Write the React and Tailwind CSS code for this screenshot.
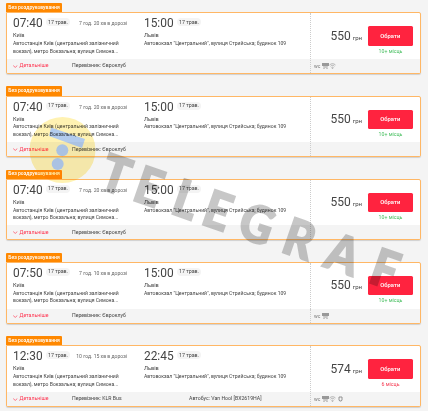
const AMENITIES_FULL = ['wc', 'bus', 'wifi'];

const TRIPS = [
  { id: 1, departure: '07:40', arrival: '15:00', duration: '7 год. 20 хв в дорозі', carrier: 'Євроклуб', price: 550, seats: '10+ місць', amenities: AMENITIES_FULL },
  { id: 2, departure: '07:40', arrival: '15:00', duration: '7 год. 20 хв в дорозі', carrier: 'Євроклуб', price: 550, seats: '10+ місць', amenities: [] },
  { id: 3, departure: '07:40', arrival: '15:00', duration: '7 год. 20 хв в дорозі', carrier: 'Євроклуб', price: 550, seats: '10+ місць', amenities: [] },
  { id: 4, departure: '07:50', arrival: '15:00', duration: '7 год. 10 хв в дорозі', carrier: 'Євроклуб', price: 550, seats: '10+ місць', amenities: ['wc', 'bus'] },
  { id: 5, departure: '12:30', arrival: '22:45', duration: '10 год. 15 хв в дорозі', carrier: 'KLR Bus', bus: 'Van Hool [BX2619HA]', price: 574, seats: '6 місць', few: true, amenities: ['wc', 'bus', 'wifi', 'socket'] },
];

function Amenity({ type }) {
  if (type === 'wc') {
    return <span className="w-[7px] text-[5px] leading-none text-[#777]">wc</span>;
  }
  if (type === 'bus') {
    return (
      <svg viewBox="0 0 14 12" className="h-[6px] w-[7px]" fill="#999">
        <path d="M0 0h14v6H0zM2 7h10l-1 2H3zM3 10h2v2H3zM9 10h2v2H9z" />
      </svg>
    );
  }
  if (type === 'wifi') {
    return (
      <svg viewBox="0 0 14 12" className="h-[6px] w-[7px]" fill="none" stroke="#999" strokeWidth="1.4">
        <path d="M1 4c3.500-3.500 8.500-3.500 12 0M3 6.500c2.500-2.300 5.500-2.300 8 0M5 9c1.300-1 2.700-1 4 0" />
        <circle cx="7" cy="10.500" r="0.600" />
      </svg>
    );
  }
  return (
    <svg viewBox="0 0 10 12" className="ml-px h-[6px] w-[5px]" fill="none" stroke="#888" strokeWidth="1.800">
      <path d="M2 2h6v6L6.500 10h-3L2 8z" />
    </svg>
  );
}

function Stop({ time, city, children, duration }) {
  return (
    <>
      <div className="flex h-[13px] items-start">
        <span className="w-[30px] text-[11.900px] leading-[14px] text-[#444]">{time}</span>
        <span className="ml-[3px] mt-[2px] flex h-[8px] w-[24px] items-center justify-center rounded-full bg-[#f4f4f4] text-[5.300px] leading-none text-[#444]">
          17 трав.
        </span>
        {duration && (
          <span className="ml-auto mt-[4px] text-[5.080px] leading-[7px] text-[#666]">{duration}</span>
        )}
      </div>
      <div className="mt-[2px] text-[5.600px] leading-[8.500px] text-[#444]">{city}</div>
      <div className="pt-[0.300px] text-[5.080px] leading-[7.600px] text-[#444]">{children}</div>
    </>
  );
}

function TripCard({ trip }) {
  return (
    <article className="h-[83.250px]">
      <div className="flex h-[9.300px] w-[56px] items-center justify-center rounded-t-[1px] bg-[#ff8800] text-[5.050px] font-medium text-white">
        Без роздруковування
      </div>
      <div className="flex h-[61.700px] w-[415px] flex-col overflow-hidden rounded-[2px] rounded-tl-none border border-[#ffb765] bg-white shadow-[0_1px_1px_rgba(0,0,0,0.15)]">
        <div className="flex min-h-0 flex-1">
          <div className="w-[120px] shrink-0 whitespace-nowrap pl-[6px] pt-[3px]">
            <Stop time={trip.departure} city="Київ" duration={trip.duration}>
              Автостанція Київ (центральний залізничний
              <br />
              вокзал), метро Вокзальна; вулиця Симона...
            </Stop>
          </div>
          <div className="ml-[17px] w-[166px] shrink-0 whitespace-nowrap pt-[3px]">
            <Stop time={trip.arrival} city="Львів">
              Автовокзал "Центральний", вулиця Стрийська; будинок 109
            </Stop>
          </div>
          <div className="flex flex-1 border-l border-dotted border-[#ccc] pt-[13px]">
            <div className="ml-[19.500px] mt-[2.300px] flex h-[14px] w-[37px] items-baseline gap-[2px] whitespace-nowrap leading-[14px] text-[#444]">
              <span className="text-[12px]">{trip.price}</span>
              <span className="text-[6px]">грн</span>
            </div>
            <div className="w-[46px]">
              <button
                type="button"
                className="flex h-[19.300px] w-[45.500px] items-center justify-center rounded-[1.500px] bg-[#ff233f] text-[5.900px] font-medium text-white"
              >
                Обрати
              </button>
              <div className={`mt-[2px] text-center text-[5.200px] leading-[7px] ${trip.few ? 'text-[#f5354d]' : 'text-[#43bd5c]'}`}>
                {trip.seats}
              </div>
            </div>
          </div>
        </div>
        <div className="flex h-[14px] shrink-0 items-center whitespace-nowrap bg-[#f4f4f4] pt-[0.700px] text-[5.200px] text-[#444]">
          <div className="flex w-[65px] items-center gap-[2px] pl-[6px] text-[#ff3551]">
            <svg viewBox="0 0 10 6" className="h-[3px] w-[4.500px]" fill="none" stroke="currentColor" strokeWidth="1.500">
              <path d="M0.500 1 5 5l4.500-4" />
            </svg>
            Детальніше
          </div>
          <div className="w-[117px]">Перевізник: {trip.carrier}</div>
          <div className="w-[121px]">{trip.bus && `Автобус: ${trip.bus}`}</div>
          <div className="flex h-full flex-1 items-center gap-[0.500px] border-l border-dotted border-[#ccc] pl-[3px]">
            {trip.amenities.map((type) => (
              <Amenity key={type} type={type} />
            ))}
          </div>
        </div>
      </div>
    </article>
  );
}

// Translucent brand mark laid over the whole list
function Watermark() {
  return (
    <svg viewBox="0 0 428 411" className="pointer-events-none absolute inset-0 h-[411px] w-[428px] mix-blend-multiply">
      <circle cx="62.500" cy="150" r="33" fill="#fff2b2" />
      <g fill="#b2cbed">
        <path d="M51 127.500 85 139l-3 9-33-12z" />
        <circle cx="62.300" cy="150.300" r="6" />
        <circle cx="57.700" cy="164" r="6" />
      </g>
      <g opacity="0.22">
        <text
          transform="translate(95 187) rotate(19.200) scale(0.9 1)"
          x="2 42 87 123 165 217 267 320"
          fill="#000"
          stroke="#000"
          strokeWidth="2"
          className="font-['Lato'] text-[51px] font-black"
        >
          TELEGRAF
        </text>
      </g>
    </svg>
  );
}

export default function App() {
  return (
    <main className="relative h-[411px] w-[428px] overflow-hidden bg-[#f4f4f4] pl-[6px] pt-[3px] font-['Roboto',sans-serif]">
      {TRIPS.map((trip) => (
        <TripCard key={trip.id} trip={trip} />
      ))}
      <Watermark />
    </main>
  );
}
